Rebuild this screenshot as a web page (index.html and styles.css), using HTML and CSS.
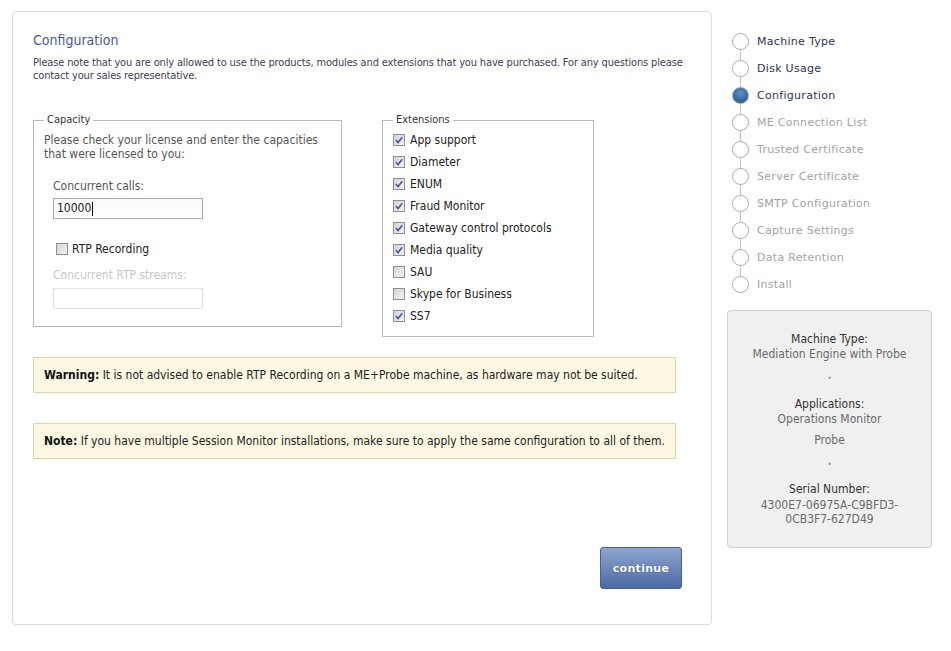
FILE: index.html
```html
<!DOCTYPE html>
<html>
<head>
<meta charset="utf-8">
<link rel="stylesheet" href="styles.css">
</head>
<body>
<div class="page">
  <main class="card">
    <h1 class="title">Configuration</h1>
    <p class="intro">Please note that you are only allowed to use the products, modules and extensions that you have purchased. For any questions please contact your sales representative.</p>
    <div class="fieldsets">
      <fieldset class="box capacity">
        <legend>Capacity</legend>
        <p class="help">Please check your license and enter the capacities that were licensed to you:</p>
        <div class="indent">
          <div class="field-label">Concurrent calls:</div>
          <div class="input">10000<span class="caret"></span></div>
          <label class="check rtp"><span class="cb"></span>RTP Recording</label>
          <div class="field-label disabled">Concurrent RTP streams:</div>
          <div class="input disabled-input"></div>
        </div>
      </fieldset>
      <fieldset class="box extensions">
        <legend>Extensions</legend>
        <label class="check row"><span class="cb on"><svg viewBox="0 0 10 10"><path d="M1.8 5 L4 7.6 L8.3 2.2"/></svg></span>App support</label>
        <label class="check row"><span class="cb on"><svg viewBox="0 0 10 10"><path d="M1.8 5 L4 7.6 L8.3 2.2"/></svg></span>Diameter</label>
        <label class="check row"><span class="cb on"><svg viewBox="0 0 10 10"><path d="M1.8 5 L4 7.6 L8.3 2.2"/></svg></span>ENUM</label>
        <label class="check row"><span class="cb on"><svg viewBox="0 0 10 10"><path d="M1.8 5 L4 7.6 L8.3 2.2"/></svg></span>Fraud Monitor</label>
        <label class="check row"><span class="cb on"><svg viewBox="0 0 10 10"><path d="M1.8 5 L4 7.6 L8.3 2.2"/></svg></span>Gateway control protocols</label>
        <label class="check row"><span class="cb on"><svg viewBox="0 0 10 10"><path d="M1.8 5 L4 7.6 L8.3 2.2"/></svg></span>Media quality</label>
        <label class="check row"><span class="cb"></span>SAU</label>
        <label class="check row"><span class="cb"></span>Skype for Business</label>
        <label class="check row"><span class="cb on"><svg viewBox="0 0 10 10"><path d="M1.8 5 L4 7.6 L8.3 2.2"/></svg></span>SS7</label>
      </fieldset>
    </div>
    <div class="alert warn"><b>Warning:</b> It is not advised to enable RTP Recording on a ME+Probe machine, as hardware may not be suited.</div>
    <div class="alert note"><b>Note:</b> If you have multiple Session Monitor installations, make sure to apply the same configuration to all of them.</div>
    <div class="actions"><button class="btn">continue</button></div>
  </main>
  <aside class="side">
    <ol class="steps">
      <li class="step done"><span class="dot"></span>Machine Type</li>
      <li class="step done"><span class="dot"></span>Disk Usage</li>
      <li class="step current"><span class="dot"></span>Configuration</li>
      <li class="step"><span class="dot"></span>ME Connection List</li>
      <li class="step"><span class="dot"></span>Trusted Certificate</li>
      <li class="step"><span class="dot"></span>Server Certificate</li>
      <li class="step"><span class="dot"></span>SMTP Configuration</li>
      <li class="step"><span class="dot"></span>Capture Settings</li>
      <li class="step"><span class="dot"></span>Data Retention</li>
      <li class="step last"><span class="dot"></span>Install</li>
    </ol>
    <div class="info">
      <div class="k">Machine Type:</div>
      <div class="v">Mediation Engine with Probe</div>
      <div class="sep">•</div>
      <div class="k k2">Applications:</div>
      <div class="v">Operations Monitor</div>
      <div class="v v2">Probe</div>
      <div class="sep">•</div>
      <div class="k k3">Serial Number:</div>
      <div class="v serial">4300E7-06975A-C9BFD3-<br>0CB3F7-627D49</div>
    </div>
  </aside>
</div>
</body>
</html>
```

FILE: styles.css
```css
* { box-sizing: border-box; }
body {
  margin: 0;
  background: #fff;
  font-family: "DejaVu Sans Condensed", "DejaVu Sans", sans-serif;
  color: #333;
}
.page {
  display: flex;
  align-items: flex-start;
  gap: 15px;
  padding: 11px 0 0 12px;
}
.card {
  width: 700px;
  height: 614px;
  border: 1px solid #dcdcdc;
  border-radius: 4px;
  padding: 19px 29px 35px 20px;
  display: flex;
  flex-direction: column;
}
.title {
  margin: 0;
  font-size: 14px;
  line-height: 18px;
  font-weight: normal;
  color: #4d5a8a;
}
.intro {
  margin: 7px -8px 0 0;
  font-size: 11px;
  letter-spacing: -0.15px;
  line-height: 13px;
  color: #3e4055;
}
.fieldsets {
  display: flex;
  gap: 40px;
  align-items: flex-start;
  margin-top: 31px;
}
.box {
  margin: 0;
  border: 1px solid #b6b9c6;
  padding: 0 10px;
  min-width: 0;
}
.box legend {
  padding: 0 3px;
  font-size: 11px;
  line-height: 14px;
  color: #333;
}
.capacity { width: 309px; padding-bottom: 17px; }
.extensions { width: 212px; padding-top: 2px; padding-bottom: 9px; }
.help {
  margin: 6px 0 0;
  font-size: 12px;
  line-height: 14px;
  color: #555;
}
.indent { padding-left: 9px; }
.field-label {
  margin-top: 18px;
  font-size: 12px;
  line-height: 14px;
  color: #555;
}
.field-label.disabled { margin-top: 12px; color: #c8c8c8; }
.input {
  margin-top: 5px;
  width: 150px;
  height: 21px;
  border: 1px solid #a9a9a9;
  font-size: 12px;
  line-height: 19px;
  padding-left: 3px;
  color: #222;
  display: flex;
  align-items: center;
  background: linear-gradient(#fafafa, #fff);
}
.caret { display: inline-block; width: 1px; height: 14px; background: #111; margin-left: 1px; }
.disabled-input { margin-top: 6px; border-color: #e3e3e3; background: #fff; }
.check {
  display: flex;
  align-items: center;
  font-size: 12px;
  color: #222;
}
.rtp { margin-top: 23px; height: 14px; padding-left: 3px; }
.row { height: 22px; }
.cb {
  width: 12px;
  height: 12px;
  flex: none;
  border: 1px solid #8e8f90;
  background: linear-gradient(135deg, #d4d4d4, #f4f4f4);
  margin-right: 5px;
  display: flex;
  align-items: center;
  justify-content: center;
}
.rtp .cb { margin-right: 4px; }
.cb svg { width: 10px; height: 10px; }
.cb svg path { fill: none; stroke: #4b5ea8; stroke-width: 1.7; }
.alert {
  margin-right: 6px;
  background: #fcf8e3;
  border: 1px solid #dbd4a0;
  font-size: 12px;
  line-height: 14px;
  padding: 10px 10px;
  color: #222;
  height: 36px;
}
.alert b { color: #111; }
.warn { margin-top: 20px; }
.note { margin-top: 30px; }
.actions { margin-top: auto; display: flex; justify-content: flex-end; }
.btn {
  width: 82px;
  height: 42px;
  border: 1px solid #44619a;
  border-radius: 3px;
  background: linear-gradient(#8fa4cc, #4c6aa5);
  color: #fff;
  font-family: "DejaVu Sans", sans-serif;
  font-weight: bold;
  font-size: 11px;
  letter-spacing: 0.3px;
  text-shadow: 0 0 1px #2c4475;
  padding: 0;
}
.side { width: 205px; display: flex; flex-direction: column; }
.steps {
  list-style: none;
  margin: 17px 0 0;
  padding: 0;
}
.step {
  position: relative;
  height: 27px;
  display: flex;
  align-items: center;
  font-family: "DejaVu Sans", sans-serif;
  font-size: 11px;
  letter-spacing: 0.3px;
  color: #a3a3a3;
}
.step::before {
  content: "";
  position: absolute;
  left: 13px;
  top: 13px;
  height: 27px;
  width: 1px;
  background: #c4c4c4;
}
.step.last::before { display: none; }
.dot {
  position: relative;
  z-index: 1;
  width: 17px;
  height: 17px;
  border-radius: 50%;
  border: 1px solid #a9a9a9;
  background: #fff;
  margin: 0 8px 0 5px;
}
.step.done, .step.current { color: #2d3452; }
.step.current .dot {
  background: radial-gradient(circle at 50% 35%, #5f93c2, #2f6394 70%);
  border-color: #9fa9b6;
}
.info {
  margin-top: 12px;
  height: 238px;
  background: #f0f0f0;
  border: 1px solid #cfcfcf;
  border-radius: 4px;
  padding: 21px 8px 0;
  text-align: center;
  font-size: 12px;
  line-height: 15px;
}
.k { color: #333; }
.v { color: #6a6a6a; }
.sep { margin-top: 9px; color: #999; font-size: 8px; }
.k2 { margin-top: 11px; }
.v2 { margin-top: 6px; }
.k3 { margin-top: 10px; }
.serial { margin-top: 1px; line-height: 14px; }
```
